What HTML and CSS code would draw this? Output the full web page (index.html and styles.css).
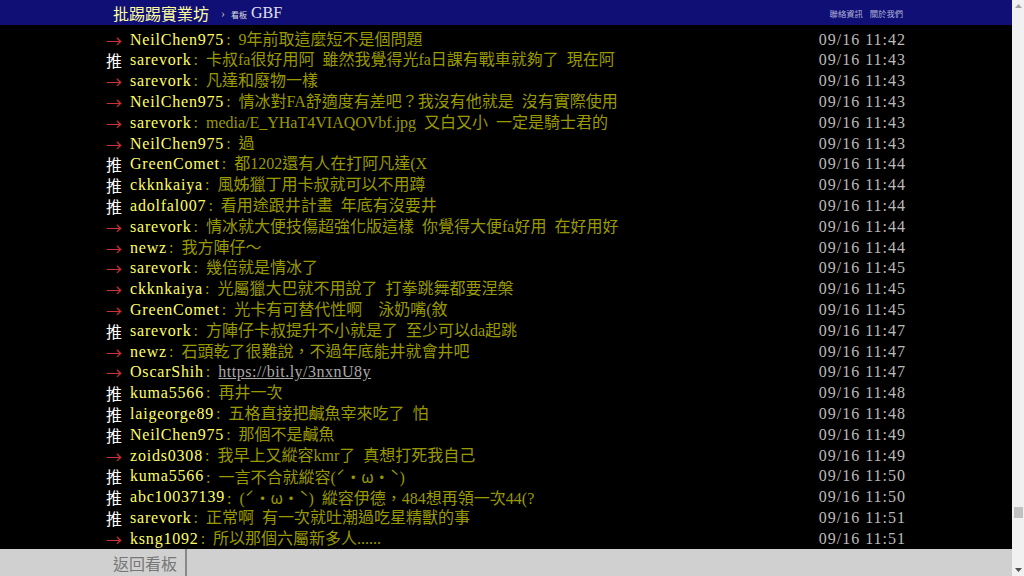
FILE: index.html
```html
<!DOCTYPE html>
<html lang="zh-Hant">
<head>
    <meta charset="UTF-8">
    <title>[問題] GBF - 批踢踢實業坊</title>
    <link rel="stylesheet" href="styles.css">
</head>
<body>
<div class="window">
    <div class="page">
        <!-- 上方標題列 -->
        <div class="topbar">
            <div class="topbar-inner">
                <a class="logo">批踢踢實業坊</a>
                <span class="sep">›</span>
                <a class="board"><span class="board-label">看板</span> GBF</a>
                <div class="right-links">
                    <a>聯絡資訊</a>
                    <a>關於我們</a>
                </div>
            </div>
        </div>

        <!-- 推文 -->
        <div class="main">
            <div class="push-list">
                <div class="push"><span class="push-tag arrow">→</span><span class="push-userid">NeilChen975</span><span class="push-content">: 9年前取這麼短不是個問題</span><span class="push-ipdatetime">09/16 11:42</span></div>
                <div class="push"><span class="push-tag">推</span><span class="push-userid">sarevork</span><span class="push-content">: 卡叔fa很好用阿 雖然我覺得光fa日課有戰車就夠了 現在阿</span><span class="push-ipdatetime">09/16 11:43</span></div>
                <div class="push"><span class="push-tag arrow">→</span><span class="push-userid">sarevork</span><span class="push-content">: 凡達和廢物一樣</span><span class="push-ipdatetime">09/16 11:43</span></div>
                <div class="push"><span class="push-tag arrow">→</span><span class="push-userid">NeilChen975</span><span class="push-content">: 情冰對FA舒適度有差吧？我沒有他就是 沒有實際使用</span><span class="push-ipdatetime">09/16 11:43</span></div>
                <div class="push"><span class="push-tag arrow">→</span><span class="push-userid">sarevork</span><span class="push-content">: media/E_YHaT4VIAQOVbf.jpg 又白又小 一定是騎士君的</span><span class="push-ipdatetime">09/16 11:43</span></div>
                <div class="push"><span class="push-tag arrow">→</span><span class="push-userid">NeilChen975</span><span class="push-content">: 過</span><span class="push-ipdatetime">09/16 11:43</span></div>
                <div class="push"><span class="push-tag">推</span><span class="push-userid">GreenComet</span><span class="push-content">: 都1202還有人在打阿凡達(X</span><span class="push-ipdatetime">09/16 11:44</span></div>
                <div class="push"><span class="push-tag">推</span><span class="push-userid">ckknkaiya</span><span class="push-content">: 風姊獵丁用卡叔就可以不用蹲</span><span class="push-ipdatetime">09/16 11:44</span></div>
                <div class="push"><span class="push-tag">推</span><span class="push-userid">adolfal007</span><span class="push-content">: 看用途跟井計畫 年底有沒要井</span><span class="push-ipdatetime">09/16 11:44</span></div>
                <div class="push"><span class="push-tag arrow">→</span><span class="push-userid">sarevork</span><span class="push-content">: 情冰就大便技傷超強化版這樣 你覺得大便fa好用 在好用好</span><span class="push-ipdatetime">09/16 11:44</span></div>
                <div class="push"><span class="push-tag arrow">→</span><span class="push-userid">newz</span><span class="push-content">: 我方陣仔～</span><span class="push-ipdatetime">09/16 11:44</span></div>
                <div class="push"><span class="push-tag arrow">→</span><span class="push-userid">sarevork</span><span class="push-content">: 幾倍就是情冰了</span><span class="push-ipdatetime">09/16 11:45</span></div>
                <div class="push"><span class="push-tag arrow">→</span><span class="push-userid">ckknkaiya</span><span class="push-content">: 光屬獵大巴就不用說了 打拳跳舞都要涅槃</span><span class="push-ipdatetime">09/16 11:45</span></div>
                <div class="push"><span class="push-tag arrow">→</span><span class="push-userid">GreenComet</span><span class="push-content">: 光卡有可替代性啊　泳奶嘴(敘</span><span class="push-ipdatetime">09/16 11:45</span></div>
                <div class="push"><span class="push-tag">推</span><span class="push-userid">sarevork</span><span class="push-content">: 方陣仔卡叔提升不小就是了 至少可以da起跳</span><span class="push-ipdatetime">09/16 11:47</span></div>
                <div class="push"><span class="push-tag arrow">→</span><span class="push-userid">newz</span><span class="push-content">: 石頭乾了很難說，不過年底能井就會井吧</span><span class="push-ipdatetime">09/16 11:47</span></div>
                <div class="push"><span class="push-tag arrow">→</span><span class="push-userid">OscarShih</span><span class="push-content">: <a class="link">https://bit.ly/3nxnU8y</a></span><span class="push-ipdatetime">09/16 11:47</span></div>
                <div class="push"><span class="push-tag">推</span><span class="push-userid">kuma5566</span><span class="push-content">: 再井一次</span><span class="push-ipdatetime">09/16 11:48</span></div>
                <div class="push"><span class="push-tag">推</span><span class="push-userid">laigeorge89</span><span class="push-content">: 五格直接把鹹魚宰來吃了 怕</span><span class="push-ipdatetime">09/16 11:48</span></div>
                <div class="push"><span class="push-tag">推</span><span class="push-userid">NeilChen975</span><span class="push-content">: 那個不是鹹魚</span><span class="push-ipdatetime">09/16 11:49</span></div>
                <div class="push"><span class="push-tag arrow">→</span><span class="push-userid">zoids0308</span><span class="push-content">: 我早上又縱容kmr了 真想打死我自己</span><span class="push-ipdatetime">09/16 11:49</span></div>
                <div class="push"><span class="push-tag">推</span><span class="push-userid">kuma5566</span><span class="push-content">: 一言不合就縱容(<span class="cjk">ˊ・ω・ˋ</span>)</span><span class="push-ipdatetime">09/16 11:50</span></div>
                <div class="push"><span class="push-tag">推</span><span class="push-userid">abc10037139</span><span class="push-content">: (<span class="cjk">ˊ・ω・ˋ</span>) 縱容伊德，484想再領一次44(?</span><span class="push-ipdatetime">09/16 11:50</span></div>
                <div class="push"><span class="push-tag">推</span><span class="push-userid">sarevork</span><span class="push-content">: 正常啊 有一次就吐潮過吃星精獸的事</span><span class="push-ipdatetime">09/16 11:51</span></div>
                <div class="push"><span class="push-tag arrow">→</span><span class="push-userid">ksng1092</span><span class="push-content">: 所以那個六屬新多人......</span><span class="push-ipdatetime">09/16 11:51</span></div>
            </div>
        </div>

        <!-- 下方按鈕列 -->
        <div class="bottombar">
            <div class="bottombar-inner">
                <a class="btn-back">返回看板</a>
            </div>
        </div>
    </div>

    <!-- 捲軸 -->
    <div class="scrollbar">
        <div class="sb-arrow">
            <svg width="7" height="4" viewBox="0 0 7 4"><polygon points="0,4 3.5,0 7,4" fill="#a3a3a3"/></svg>
        </div>
        <div class="sb-track"><div class="sb-thumb"></div></div>
        <div class="sb-arrow">
            <svg width="7" height="4" viewBox="0 0 7 4"><polygon points="0,0 7,0 3.5,4" fill="#505050"/></svg>
        </div>
    </div>
</div>
</body>
</html>
```

FILE: styles.css
```css
html, body {
    margin: 0;
    height: 100%;
    overflow: hidden;
}
body {
    background: #000;
    color: #ccc;
    font-family: 'Liberation Serif', 'Noto Sans CJK TC', serif;
    font-size: 16px;
}
a { color: inherit; text-decoration: none; }
.cjk { font-family: 'Noto Sans CJK TC', sans-serif; }

.window {
    display: flex;
    height: 100vh;
}
.page {
    flex: 1;
    display: flex;
    flex-direction: column;
    min-width: 0;
}

/* top bar */
.topbar {
    height: 25px;
    background: #0f0f75;
    flex-shrink: 0;
}
.topbar-inner {
    width: 800px;
    margin: 0 auto;
    height: 100%;
    display: flex;
    align-items: center;
    padding: 0 3px 0 7px;
    box-sizing: border-box;
}
.logo {
    color: #ffffa0;
    font-family: 'Noto Sans CJK TC', sans-serif;
    font-size: 16px;
}
.sep {
    color: #bbb;
    font-size: 12px;
    margin: 2px 6px 0 12px;
}
.board {
    color: #e0e0f0;
    font-size: 16px;
}
.board-label {
    font-family: 'Noto Sans CJK TC', sans-serif;
    font-size: 8px;
    color: #ddd;
}
.right-links {
    margin-left: auto;
    display: flex;
    gap: 7px;
    font-family: 'Noto Sans CJK TC', sans-serif;
    font-size: 8.3px;
    color: #b0b0d8;
}

/* push list */
.main {
    flex: 1;
    overflow: hidden;
    padding-top: 4.6px;
}
.push-list {
    width: 800px;
    margin: 0 auto;
}
.push {
    display: flex;
    height: 20.8px;
    line-height: 20.8px;
    white-space: nowrap;
}
.push-tag {
    width: 24px;
    flex-shrink: 0;
    color: #fff;
    font-family: 'Noto Sans CJK TC', sans-serif;
}
.push-tag.arrow {
    color: #c33;
}
.push-userid {
    color: #ff6;
    letter-spacing: 0.8px;
}
.push-content {
    color: #990;
    word-spacing: 4px;
    padding-left: 2px;
}
.push-content .link {
    color: #aaa;
    text-decoration: underline;
    word-spacing: 0;
    letter-spacing: 0.5px;
}
.push-ipdatetime {
    margin-left: auto;
    color: #bbb;
    letter-spacing: 1px;
}

/* bottom bar */
.bottombar {
    height: 27px;
    background: #d0d0d0;
    flex-shrink: 0;
}
.bottombar-inner {
    width: 800px;
    margin: 0 auto;
    height: 100%;
    display: flex;
}
.btn-back {
    display: flex;
    align-items: center;
    padding: 0 8px 0 7px;
    border-right: 2px solid #888;
    color: #777;
    font-family: 'Noto Sans CJK TC', sans-serif;
    font-size: 16px;
}

/* fake scrollbar */
.scrollbar {
    width: 12px;
    background: #f1f1f1;
    display: flex;
    flex-direction: column;
    flex-shrink: 0;
}
.sb-arrow {
    height: 12px;
    display: flex;
    align-items: center;
    justify-content: center;
}
.sb-track {
    flex: 1;
    display: flex;
    flex-direction: column;
    justify-content: flex-end;
    align-items: center;
    padding-bottom: 46px;
}
.sb-thumb {
    width: 9px;
    height: 11px;
    background: #c1c1c1;
}
```
